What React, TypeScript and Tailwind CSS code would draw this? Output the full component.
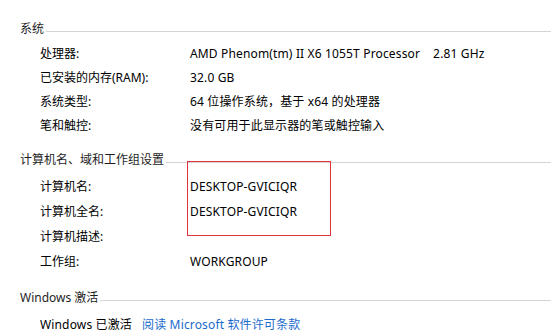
import React from "react";

type Row = { label: string; value?: string };

const systemRows: Row[] = [
  { label: "处理器:", value: "AMD Phenom(tm) II X6 1055T Processor\u00a0\u00a0\u00a0 2.81 GHz" },
  { label: "已安装的内存(RAM):", value: "32.0 GB" },
  { label: "系统类型:", value: "64 位操作系统，基于 x64 的处理器" },
  { label: "笔和触控:", value: "没有可用于此显示器的笔或触控输入" },
];

const computerRows: Row[] = [
  { label: "计算机名:", value: "DESKTOP-GVICIQR" },
  { label: "计算机全名:", value: "DESKTOP-GVICIQR" },
  { label: "计算机描述:" },
  { label: "工作组:", value: "WORKGROUP" },
];

function Heading({ title, className }: { title: string; className?: string }) {
  return (
    <div className={"flex h-[20px] items-center pl-[20px] " + (className ?? "")}>
      <span className="text-[#1e1e1e]">{title}</span>
      <div className="ml-[2px] mt-[5px] h-px flex-1 bg-[#d4d4d4]" />
    </div>
  );
}

function InfoRow({ row, tall }: { row: Row; tall?: boolean }) {
  return (
    <div className={"grid grid-cols-[150px_1fr] items-center pl-[40px] " + (tall ? "h-[25px]" : "h-[24px]")}>
      <span>{row.label}</span>
      <span className="whitespace-pre tracking-[0.15px]">{row.value ?? ""}</span>
    </div>
  );
}

export default function App() {
  return (
    <div
      className="relative h-[336px] w-[551px] overflow-hidden bg-white text-[12px] leading-none text-black"
      style={{ fontFamily: '"Noto Sans", "Noto Sans CJK SC", sans-serif' }}
    >
      <Heading title="系统" className="mt-[19px]" />
      <div className="mt-[3px]">
        {systemRows.map((r) => (
          <InfoRow key={r.label} row={r} />
        ))}
      </div>

      <Heading title="计算机名、域和工作组设置" className="mt-[12px]" />
      <div className="mt-[4px]">
        {computerRows.map((r) => (
          <InfoRow key={r.label} row={r} tall />
        ))}
      </div>

      <Heading title="Windows 激活" className="mt-[14px]" />
      <div className="mt-[4px] flex h-[25px] items-center pl-[40px] tracking-[0.15px]">
        <span>Windows 已激活</span>
        <span className="ml-[10px] text-[#1a6bcc]">阅读 Microsoft 软件许可条款</span>
      </div>

      {/* red annotation box */}
      <div className="absolute left-[187px] top-[161px] h-[75px] w-[144px] border border-[#e0343c]" />
    </div>
  );
}
